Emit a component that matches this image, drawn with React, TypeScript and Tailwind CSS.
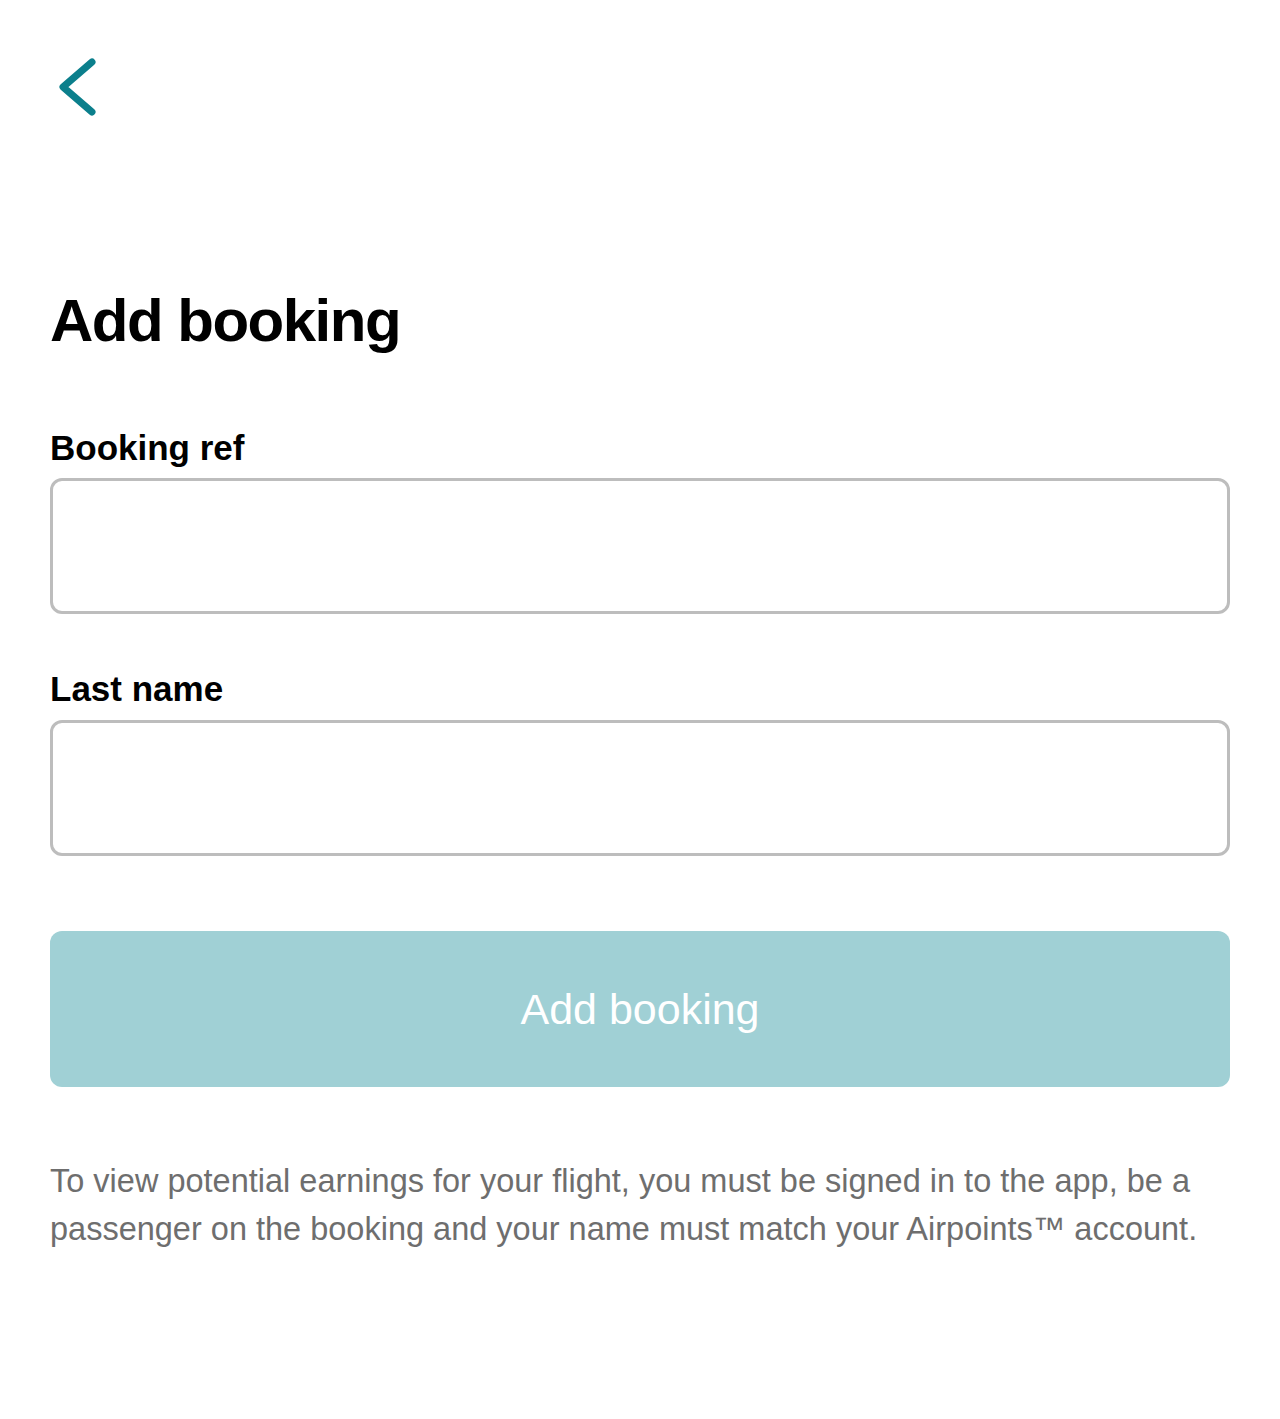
export default function App() {
	return (
		<div className="min-h-[1419px] bg-white px-[50px] font-['Liberation_Sans',Arial,sans-serif]">
			<div className="pt-[50px]">
				<svg width="50" height="70" viewBox="0 0 50 70" fill="none">
					<path
						d="M42 12 L13 37 L42 62"
						stroke="#0b7f8c"
						strokeWidth="7"
						strokeLinecap="round"
						strokeLinejoin="round"
					/>
				</svg>
			</div>
			<h1 className="mt-[171px] text-[60px] font-bold leading-none tracking-[-1.5px] text-black">
				Add booking
			</h1>
			<div className="mt-[79px]">
				<label className="block text-[35px] font-bold leading-none tracking-[0px] text-black">
					Booking ref
				</label>
				<input
					type="text"
					className="mt-[13px] block h-[136px] w-full rounded-[12px] border-[3px] border-[#bdbdbd] bg-white outline-none"
				/>
			</div>
			<div className="mt-[57px]">
				<label className="block text-[35px] font-bold leading-none tracking-[0px] text-black">
					Last name
				</label>
				<input
					type="text"
					className="mt-[14px] block h-[136px] w-full rounded-[12px] border-[3px] border-[#bdbdbd] bg-white outline-none"
				/>
			</div>
			<button
				type="button"
				className="mt-[75px] flex h-[156px] w-full items-center justify-center rounded-[12px] bg-[#a0d0d5] text-[43px] text-white"
			>
				Add booking
			</button>
			<p className="mt-[70px] text-[32.5px] leading-[48px] text-[#6e6e6e]">
				To view potential earnings for your flight, you must be signed in to
				the app, be a passenger on the booking and your name must match your
				Airpoints™ account.
			</p>
		</div>
	);
}
